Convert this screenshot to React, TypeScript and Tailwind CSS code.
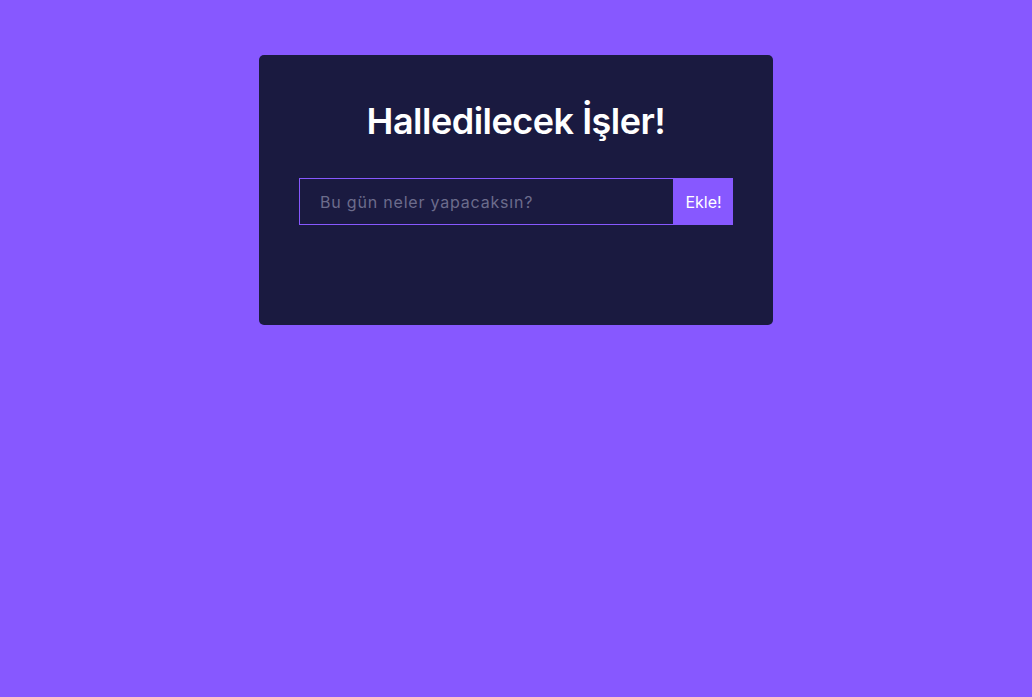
import React, { useState } from "react";

const App: React.FC = () => {
  const [task, setTask] = useState<string>("");

  return (
    <div
      className="min-h-[697px] w-full bg-[#8758ff] pt-[55px]"
      style={{ fontFamily: "Inter, 'Noto Sans', sans-serif" }}
    >
      <div className="mx-auto w-[514px] rounded-[5px] bg-[#1a1a40] px-10 pt-[42px] pb-[100px]">
        <h1 className="text-center text-[36px] leading-[48px] font-semibold tracking-[-0.5px] text-white">
          Halledilecek İşler!
        </h1>
        <form
          className="mt-[33px] flex h-[47px]"
          onSubmit={(e) => {
            e.preventDefault();
            setTask("");
          }}
        >
          <input
            type="text"
            value={task}
            onChange={(e) => setTask(e.target.value)}
            placeholder="Bu gün neler yapacaksın?"
            className="h-full flex-1 border border-[#8758ff] bg-transparent pt-px pr-5 pl-5 text-[16px] tracking-[0.8px] text-white outline-none placeholder:text-[#6c6c8c]"
          />
          <button
            type="submit"
            className="h-full w-[59px] bg-[#8758ff] text-[16px] text-white"
          >
            Ekle!
          </button>
        </form>
      </div>
    </div>
  );
};

export default App;
